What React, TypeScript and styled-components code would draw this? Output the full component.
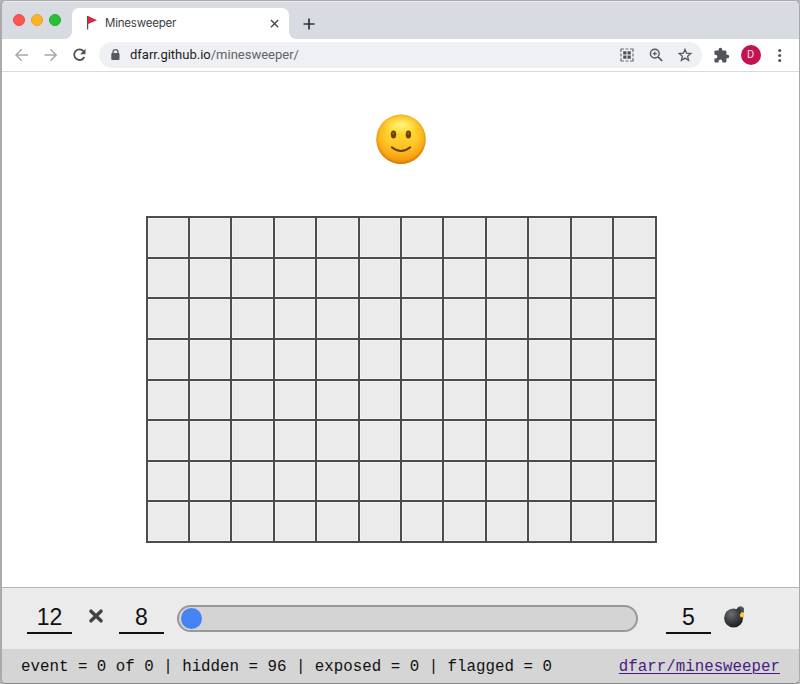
import React from "react";
import styled, { createGlobalStyle } from "styled-components";

const GlobalStyle = createGlobalStyle`
  * { box-sizing: border-box; }
  body { margin: 0; background: #b4b4b4; }
`;

const Window = styled.div`
  width: 800px;
  height: 684px;
  display: flex;
  flex-direction: column;
  overflow: hidden;
  border: solid #aaa;
  border-width: 1px 1px 1px 2px;
  border-bottom-color: #858585;
  border-radius: 6px;
  background: #fff;
  font-family: Inter, "Liberation Sans", sans-serif;
`;

const TabStrip = styled.div`
  flex: none;
  height: 38px;
  display: flex;
  align-items: flex-end;
  background: #d8dbe2;
  border-top: 1px solid #e9ebee;
`;

const TrafficLights = styled.div`
  width: 70px;
  height: 37px;
  display: flex;
  gap: 6px;
  padding: 12px 0 0 11px;
`;

const Light = styled.span<{ $fill: string; $edge: string }>`
  width: 12px;
  height: 12px;
  border-radius: 50%;
  background: ${(p) => p.$fill};
  border: 1px solid ${(p) => p.$edge};
`;

const Tab = styled.div`
  position: relative;
  width: 217px;
  height: 31px;
  display: flex;
  align-items: center;
  padding: 0 9px 1px 14px;
  border-radius: 7px 7px 0 0;
  background: #fff;

  &::before,
  &::after {
    content: "";
    position: absolute;
    bottom: 0;
    width: 7px;
    height: 7px;
  }
  &::before {
    left: -7px;
    background: radial-gradient(circle at 0 0, transparent 6.5px, #fff 7px);
  }
  &::after {
    right: -7px;
    background: radial-gradient(circle at 100% 0, transparent 6.5px, #fff 7px);
  }
`;

const TabTitle = styled.span`
  flex: 1;
  margin-left: 7px;
  font: 11.5px/16px Inter, sans-serif;
  letter-spacing: -0.2px;
  color: #3c3e42;
`;

const NewTab = styled.div`
  width: 40px;
  height: 31px;
  display: grid;
  place-items: center;
`;

const Toolbar = styled.div`
  flex: none;
  height: 33px;
  display: flex;
  align-items: center;
  padding: 0 10px 0 10px;
  border-bottom: 1px solid #d9dadc;
`;

const NavButtons = styled.div`
  width: 87px;
  display: flex;
  gap: 9px;
`;

const Icon = styled.svg`
  display: block;
  flex: none;
`;

const AddressBar = styled.div`
  width: 603px;
  height: 26px;
  display: flex;
  align-items: center;
  padding: 0 8px 0 8px;
  border-radius: 13px;
  background: #eff0f3;
`;

const Url = styled.span`
  flex: 1;
  margin-left: 6px;
  font: 13px/20px Roboto, sans-serif;
  color: #606367;
`;

const Host = styled.span`
  color: #1c1d1f;
`;

const AddressActions = styled.div`
  display: flex;
  gap: 11px;
`;

const BrowserActions = styled.div`
  flex: 1;
  display: flex;
  align-items: center;
  justify-content: space-between;
  padding-left: 11px;
`;

const Avatar = styled.span`
  width: 20px;
  height: 20px;
  border-radius: 50%;
  background: #c2154f;
  color: #f7dce5;
  font: 11px/20px Roboto, sans-serif;
  text-align: center;
`;

const Page = styled.main`
  flex: none;
  height: 515px;
  display: flex;
  flex-direction: column;
  align-items: center;
  padding-top: 42px;
`;

const Board = styled.div`
  width: 511px;
  height: 327px;
  margin: 50px 0 0 1px;
  display: grid;
  grid-template-columns: repeat(12, 1fr);
  grid-template-rows: repeat(8, 1fr);
  gap: 2px;
  padding: 2px;
  background: #4c4c4c;
`;

const Cell = styled.div`
  background: #ebebeb;
  box-shadow: inset 0 0 0 1px #f2f2f2;
`;

const Controls = styled.div`
  flex: none;
  height: 62px;
  display: flex;
  align-items: flex-start;
  padding: 16px 0 0 25px;
  border-top: 1px solid #b4b4b4;
  background: #ebebeb;
`;

const NumberField = styled.div`
  width: 45px;
  height: 30px;
  border-bottom: 2px solid #111;
  color: #111;
  font: 23px/27px "Liberation Sans", Arial, sans-serif;
  text-align: center;
`;

const Times = styled.div`
  width: 47px;
  height: 24px;
  display: grid;
  place-items: center;
`;

const Slider = styled.div`
  width: 461px;
  height: 27px;
  margin: 1px 28px 0 13px;
  padding: 1px 2px;
  border: 2px solid #999;
  border-radius: 14px;
  background: #d4d4d4;
`;

const Thumb = styled.div`
  width: 21px;
  height: 21px;
  border-radius: 50%;
  background: #4583f4;
`;

const BombSlot = styled.div`
  margin: 2px 0 0 13px;
`;

const StatusBar = styled.div`
  flex: 1;
  display: flex;
  align-items: center;
  justify-content: space-between;
  padding: 2px 19px 0 19px;
  background: #d5d5d5;
  color: #111;
  font: 15.81px/20px "Liberation Mono", "Courier New", monospace;
  white-space: pre;
`;

const RepoLink = styled.a`
  color: #4a1b83;
  text-decoration: underline;
  text-decoration-thickness: 1px;
  text-underline-offset: 2px;
`;

const Flag = () => (
  <Icon width="12" height="16" viewBox="0 0 12 16">
    <path d="M1.6 1v13.5" stroke="#555" strokeWidth="1.3" />
    <path d="M2 1L11 5.3 2 9z" fill="#dc2640" />
  </Icon>
);

const Arrow = ({ flip = false }: { flip?: boolean }) => (
  <Icon width="20" height="20" viewBox="0 0 20 20" fill="none" stroke="#a6a8ab" strokeWidth="1.5">
    <path d={flip ? "M3.5 10h11.5M9.5 4.3L15.2 10l-5.7 5.7" : "M16 10H4.5M9.7 4.3L4 10l5.7 5.7"} />
  </Icon>
);

const Reload = () => (
  <Icon width="20" height="20" viewBox="0 0 20 20">
    <path d="M13.6 6.3A5.3 5.3 0 1 0 14.3 12" fill="none" stroke="#4f5256" strokeWidth="1.8" />
    <path d="M15.5 3.8v5.4h-5.4z" fill="#4f5256" />
  </Icon>
);

const Lock = () => (
  <Icon width="17" height="16" viewBox="0 0 17 16">
    <path d="M6 7V5.1a2.5 2.5 0 0 1 5 0V7" fill="none" stroke="#56595d" strokeWidth="1.3" />
    <rect x="4.3" y="6.1" width="8.2" height="7" rx="1" fill="#56595d" />
  </Icon>
);

const QrCode = () => (
  <Icon width="18" height="18" viewBox="0 0 18 18">
    <path d="M3 6V3h3M7.5 3h3M12 3h3v3M15 7.5v3M15 12v3h-3M10.5 15h-3M6 15H3v-3M3 10.5v-3" fill="none" stroke="#6b6e72" strokeWidth="1.2" />
    <path d="M5.2 5.2h3.3v3.3H5.2zM9.5 5.2h3.3v3.3H9.5zM5.2 9.5h3.3v3.3H5.2zM9.5 9.5h3.3v3.3H9.5z" fill="#505358" />
  </Icon>
);

const Magnifier = () => (
  <Icon width="18" height="18" viewBox="0 0 18 18" fill="none" stroke="#55585d">
    <circle cx="7.8" cy="7.6" r="4.4" strokeWidth="1.4" />
    <path d="M11 10.8l4.2 4.2" strokeWidth="1.7" />
    <path d="M5.8 7.6h4M7.8 5.6v4" strokeWidth="1.1" />
  </Icon>
);

const Star = () => (
  <Icon width="18" height="18" viewBox="0 0 18 18">
    <path d="M9 3.4l1.6 3.8 4.2.4-3.2 2.7 1 4L9 12.1l-3.6 2.2 1-4-3.2-2.7 4.2-.4z" fill="none" stroke="#55585d" strokeWidth="1.3" />
  </Icon>
);

const Puzzle = () => (
  <Icon width="17" height="17" viewBox="0 0 24 24" fill="#505357">
    <path d="M20.5 11H19V7c0-1.1-.9-2-2-2h-4V3.5a2.5 2.5 0 0 0-5 0V5H4c-1.1 0-1.99.9-1.99 2v3.8H3.5a2.7 2.7 0 0 1 0 5.4H2V20c0 1.1.9 2 2 2h3.8v-1.5a2.7 2.7 0 0 1 5.4 0V22H17c1.1 0 2-.9 2-2v-4h1.5a2.5 2.5 0 0 0 0-5z" />
  </Icon>
);

const Kebab = () => (
  <Icon width="18" height="18" viewBox="0 0 18 18" fill="#505357">
    <circle cx="8.7" cy="4.6" r="1.5" />
    <circle cx="8.7" cy="9.5" r="1.5" />
    <circle cx="8.7" cy="14.4" r="1.5" />
  </Icon>
);

const Smiley = () => (
  <Icon width="52" height="52" viewBox="0 0 52 52">
    <defs>
      <linearGradient id="face" x1="0" y1="0" x2="0" y2="1">
        <stop offset="0" stopColor="#ffdf36" />
        <stop offset="0.5" stopColor="#ffcf2c" />
        <stop offset="0.8" stopColor="#fdb41d" />
        <stop offset="1" stopColor="#f29a0c" />
      </linearGradient>
      <radialGradient id="shade" cx="0.5" cy="0.47" r="0.53">
        <stop offset="0.5" stopColor="#f9a30b" stopOpacity="0" />
        <stop offset="0.84" stopColor="#f2940c" stopOpacity="0.45" />
        <stop offset="1" stopColor="#cf6500" stopOpacity="0.8" />
      </radialGradient>
      <radialGradient id="glow">
        <stop offset="0" stopColor="#fff68a" stopOpacity="0.9" />
        <stop offset="1" stopColor="#fff15c" stopOpacity="0" />
      </radialGradient>
    </defs>
    <circle cx="26" cy="25.3" r="24.7" fill="url(#face)" />
    <circle cx="26" cy="25.3" r="24.7" fill="url(#shade)" />
    <ellipse cx="26" cy="11" rx="19" ry="10" fill="url(#glow)" />
    <ellipse cx="18.5" cy="20.5" rx="2.7" ry="4" fill="#6b4208" />
    <ellipse cx="33.4" cy="20.5" rx="2.7" ry="4" fill="#6b4208" />
    <ellipse cx="18.3" cy="19.3" rx="0.8" ry="1.3" fill="#94702a" />
    <ellipse cx="33.2" cy="19.3" rx="0.8" ry="1.3" fill="#94702a" />
    <path d="M16.8 33.3Q26 40.8 35.2 33.3" fill="none" stroke="#693d08" strokeWidth="1.9" strokeLinecap="round" />
  </Icon>
);

const Bomb = () => (
  <Icon width="22" height="23" viewBox="0 0 22 23">
    <defs>
      <radialGradient id="bomb" cx="0.38" cy="0.3" r="0.7">
        <stop offset="0" stopColor="#6b6f73" />
        <stop offset="0.5" stopColor="#414446" />
        <stop offset="1" stopColor="#1e2021" />
      </radialGradient>
    </defs>
    <circle cx="9.6" cy="12" r="9.5" fill="url(#bomb)" />
    <path d="M12 4l2.3-3.2 5.2 3.3-2.5 4.2z" fill="#3b3e40" />
    <path d="M15 1.500q3-1.500 4.300 1.300l-.2 4" fill="#4a4d4f" stroke="#555" strokeWidth="1.400" />
    <path d="M17.400 5.800l1.200 2 1.500.2-.4 1.500.4 1.800-2.200.3-2-1 .1-2z" fill="#f8b51e" />
    <circle cx="17.800" cy="9.300" r="1.400" fill="#ffd83c" />
  </Icon>
);

export default function App() {
  return (
    <>
      <GlobalStyle />
      <Window>
        <TabStrip>
          <TrafficLights>
            <Light $fill="#ff5652" $edge="#e84844" />
            <Light $fill="#fdb328" $edge="#e6a025" />
            <Light $fill="#28c136" $edge="#20ad2b" />
          </TrafficLights>
          <Tab>
            <Flag />
            <TabTitle>Minesweeper</TabTitle>
            <Icon width="11" height="11" viewBox="0 0 11 11">
              <path d="M2 2l7.2 7.2M9.2 2L2 9.2" stroke="#484a4e" strokeWidth="1.4" />
            </Icon>
          </Tab>
          <NewTab>
            <Icon width="14" height="14" viewBox="0 0 14 14">
              <path d="M1.5 7h11M7 1.5v11" stroke="#333538" strokeWidth="1.7" />
            </Icon>
          </NewTab>
        </TabStrip>
        <Toolbar>
          <NavButtons>
            <Arrow />
            <Arrow flip />
            <Reload />
          </NavButtons>
          <AddressBar>
            <Lock />
            <Url>
              <Host>dfarr.github.io</Host>/minesweeper/
            </Url>
            <AddressActions>
              <QrCode />
              <Magnifier />
              <Star />
            </AddressActions>
          </AddressBar>
          <BrowserActions>
            <Puzzle />
            <Avatar>D</Avatar>
            <Kebab />
          </BrowserActions>
        </Toolbar>
        <Page>
          <Smiley />
          <Board>
            {Array.from({ length: 96 }, (_, i) => (
              <Cell key={i} />
            ))}
          </Board>
        </Page>
        <Controls>
          <NumberField>12</NumberField>
          <Times>
            <Icon width="16" height="16" viewBox="0 0 16 16">
              <path d="M3 3.2l10 9.6M13 3.2L3 12.8" stroke="#424242" strokeWidth="3.5" strokeLinecap="round" />
            </Icon>
          </Times>
          <NumberField>8</NumberField>
          <Slider>
            <Thumb />
          </Slider>
          <NumberField>5</NumberField>
          <BombSlot>
            <Bomb />
          </BombSlot>
        </Controls>
        <StatusBar>
          <span>event = 0 of 0 | hidden = 96 | exposed = 0 | flagged = 0</span>
          <RepoLink href="#">dfarr/minesweeper</RepoLink>
        </StatusBar>
      </Window>
    </>
  );
}
